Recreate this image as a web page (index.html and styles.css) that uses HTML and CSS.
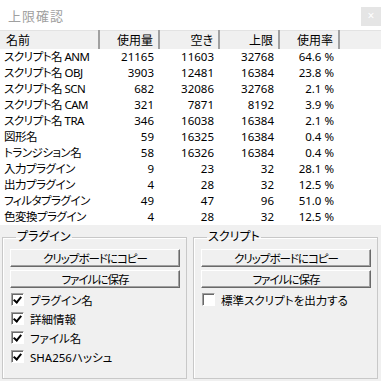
FILE: index.html
```html
<!DOCTYPE html>
<html lang="ja">
<head>
  <meta charset="UTF-8" />
  <title>上限確認</title>
  <link rel="stylesheet" href="styles.css">
</head>
<body>
  <div class="window">
    <div class="titlebar">
      <span class="title">上限確認</span>
      <span class="close">×</span>
    </div>

    <table class="limits">
      <colgroup>
        <col class="c-name"><col class="c-num"><col class="c-num"><col class="c-num"><col class="c-num"><col>
      </colgroup>
      <thead>
        <tr><th class="name">名前</th><th>使用量</th><th>空き</th><th>上限</th><th>使用率</th><th class="filler"></th></tr>
      </thead>
      <tbody>
        <tr><td class="name">スクリプト名 ANM</td><td>21165</td><td>11603</td><td>32768</td><td>64.6 %</td><td></td></tr>
        <tr><td class="name">スクリプト名 OBJ</td><td>3903</td><td>12481</td><td>16384</td><td>23.8 %</td><td></td></tr>
        <tr><td class="name">スクリプト名 SCN</td><td>682</td><td>32086</td><td>32768</td><td>2.1 %</td><td></td></tr>
        <tr><td class="name">スクリプト名 CAM</td><td>321</td><td>7871</td><td>8192</td><td>3.9 %</td><td></td></tr>
        <tr><td class="name">スクリプト名 TRA</td><td>346</td><td>16038</td><td>16384</td><td>2.1 %</td><td></td></tr>
        <tr><td class="name">図形名</td><td>59</td><td>16325</td><td>16384</td><td>0.4 %</td><td></td></tr>
        <tr><td class="name">トランジション名</td><td>58</td><td>16326</td><td>16384</td><td>0.4 %</td><td></td></tr>
        <tr><td class="name">入力プラグイン</td><td>9</td><td>23</td><td>32</td><td>28.1 %</td><td></td></tr>
        <tr><td class="name">出力プラグイン</td><td>4</td><td>28</td><td>32</td><td>12.5 %</td><td></td></tr>
        <tr><td class="name">フィルタプラグイン</td><td>49</td><td>47</td><td>96</td><td>51.0 %</td><td></td></tr>
        <tr><td class="name">色変換プラグイン</td><td>4</td><td>28</td><td>32</td><td>12.5 %</td><td></td></tr>
      </tbody>
    </table>

    <div class="groups">
      <fieldset class="group">
        <legend>プラグイン</legend>
        <button class="btn">クリップボードにコピー</button>
        <button class="btn">ファイルに保存</button>
        <label class="check"><span class="box checked"></span>プラグイン名</label>
        <label class="check"><span class="box checked"></span>詳細情報</label>
        <label class="check"><span class="box checked"></span>ファイル名</label>
        <label class="check"><span class="box checked"></span>SHA256ハッシュ</label>
      </fieldset>
      <fieldset class="group">
        <legend>スクリプト</legend>
        <button class="btn">クリップボードにコピー</button>
        <button class="btn">ファイルに保存</button>
        <label class="check"><span class="box"></span>標準スクリプトを出力する</label>
      </fieldset>
    </div>
  </div>
</body>
</html>
```

FILE: styles.css
```css
body {
  margin: 0;
  background: #f0f0f0;
  font-family: "Noto Sans", "Noto Sans CJK JP", sans-serif;
  font-size: 11.5px;
  font-feature-settings: "palt";
  color: #000;
}

.window {
  width: 381px;
  height: 381px;
  overflow: hidden;
}

.titlebar {
  height: 30px;
  background: #fff;
  display: flex;
  align-items: flex-start;
  justify-content: space-between;
}

.title {
  margin: 6px 0 0 8px;
  font-size: 13px;
  letter-spacing: 1px;
  color: #a0a0a0;
}

.close {
  width: 20px;
  height: 19px;
  margin-top: 7px;
  background: #e5e5e5;
  color: #fff;
  text-align: center;
  line-height: 18px;
  font-size: 12px;
}

/* list view */
.limits {
  width: 381px;
  table-layout: fixed;
  border-collapse: collapse;
  background: #fff;
}

.c-name { width: 99px; }
.c-num { width: 60px; }

.limits th {
  height: 18px;
  padding: 0 5px 0 0;
  background: #f0f0f0;
  border-top: 1px solid #e3e3e3;
  border-right: 2px solid #a0a0a0;
  font-weight: normal;
  font-size: 12px;
  text-align: right;
  line-height: 17px;
}

.limits th.filler {
  border-right: none;
}

.limits td {
  height: 16px;
  padding: 0 5px 0 0;
  text-align: right;
  line-height: 16px;
  white-space: nowrap;
}

.limits .name {
  text-align: left;
  padding-left: 6px;
}

.limits td.name {
  padding-left: 4px;
  letter-spacing: -0.5px;
}

/* group boxes */
.groups {
  display: flex;
  gap: 6px;
  padding: 5px 3px 0 2px;
}

.group {
  flex: 1;
  box-sizing: border-box;
  height: 149px;
  margin: 0;
  padding: 5px 6px 0 7px;
  border: 1px solid #c8c8c8;
  box-shadow: inset 1px 1px 0 #fff;
  display: flex;
  flex-direction: column;
}

.group legend {
  padding: 0 1px;
  margin-left: 6px;
  line-height: 14px;
  font-size: 12px;
}

.btn {
  height: 18px;
  padding: 0;
  font: inherit;
  font-feature-settings: "palt";
  letter-spacing: -1px;
  background: #f0f0f0;
  border: 1px solid;
  border-color: #fff #696969 #696969 #fff;
  box-shadow: inset -1px -1px 0 #a0a0a0;
}

.btn + .btn {
  margin-top: 3px;
}

.check {
  display: flex;
  align-items: center;
  gap: 6px;
  height: 19px;
  margin-left: 1px;
}

.btn + .check {
  margin-top: 2px;
}

.box {
  width: 11px;
  height: 11px;
  background: #fff;
  border: 1px solid;
  border-color: #a0a0a0 #fff #fff #a0a0a0;
  box-shadow: inset 1px 1px 0 #696969;
  position: relative;
}

.box.checked::after {
  content: "";
  position: absolute;
  left: 3px;
  top: 1px;
  width: 3px;
  height: 6px;
  border: solid #000;
  border-width: 0 2px 2px 0;
  transform: rotate(40deg);
}
```
